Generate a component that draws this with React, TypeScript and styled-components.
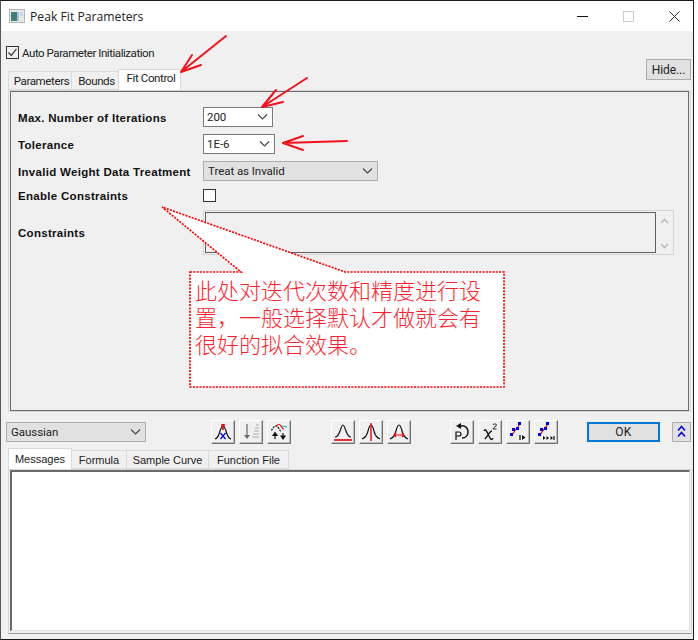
import React from "react";
import styled, { createGlobalStyle } from "styled-components";

const Global = createGlobalStyle`
  html, body { margin: 0; padding: 0; background: #fff; }
  * { box-sizing: border-box; }
`;

const UI = `Roboto, "Liberation Sans", Arial, sans-serif`;

const Win = styled.div`
  position: relative;
  width: 694px;
  height: 640px;
  border: 1px solid #1a1a1a;
  border-left-color: #555;
  background: #f0f0f0;
  display: flex;
  flex-direction: column;
  font-family: ${UI};
  color: #111;
  overflow: hidden;
`;

const TitleBar = styled.div`
  height: 30px;
  background: #fff;
  display: flex;
  align-items: center;
  padding-left: 8px;
  flex: none;
`;

const TitleText = styled.span`
  margin-left: 5px;
  font: 12.2px "Open Sans", sans-serif;
  color: #222;
`;

const WinControls = styled.div`
  margin-left: auto;
  display: flex;
  margin-right: 13px;
  gap: 35px;
  align-items: center;
`;

const TopArea = styled.div`
  display: flex;
  justify-content: space-between;
  height: 59px;
  padding-left: 5px;
  flex: none;
`;

const TopLeft = styled.div`
  display: flex;
  flex-direction: column;
  padding-top: 15px;
`;

const CheckRow = styled.label`
  display: flex;
  align-items: center;
  height: 13px;
  gap: 3px;
  font-size: 11.5px;
  letter-spacing: -0.45px;
  color: #222;
  white-space: nowrap;
`;

const CheckBox = styled.span<{ $size?: number; $white?: boolean }>`
  display: inline-flex;
  align-items: center;
  justify-content: center;
  width: ${(p) => p.$size ?? 13}px;
  height: ${(p) => p.$size ?? 13}px;
  border: 1px solid #333;
  background: ${(p) => (p.$white ? "#fff" : "#f0f0f0")};
  flex: none;
`;

const TabStrip = styled.div<{ $top: number; $left: number }>`
  display: flex;
  align-items: flex-end;
  margin-top: ${(p) => p.$top}px;
  margin-left: ${(p) => p.$left}px;
  height: 21px;
  flex: none;
`;

const Tab = styled.div<{ $w: number; $active?: boolean; $lift?: boolean; $bold?: boolean }>`
  width: ${(p) => p.$w}px;
  height: ${(p) => (p.$active ? 21 : 19)}px;
  background: ${(p) => (p.$active ? "#fff" : "#f0f0f0")};
  border: 1px solid #dadada;
  border-bottom: ${(p) => (p.$active ? "none" : "1px solid #dadada")};
  margin-left: -1px;
  padding-bottom: ${(p) => (p.$lift ? 4 : 0)}px;
  padding-left: ${(p) => (p.$bold ? 0 : 3)}px;
  display: flex;
  align-items: center;
  justify-content: center;
  font-family: ${(p) => (p.$bold ? `"Liberation Sans", sans-serif` : UI)};
  font-size: ${(p) => (p.$bold ? 11 : 11.5)}px;
  color: #222;
  letter-spacing: ${(p) => (p.$bold ? "0" : "-0.38px")};
  white-space: nowrap;
  &:first-child { margin-left: 0; }
`;

const HideBtn = styled.button`
  margin-top: 28px;
  margin-right: 2px;
  width: 45px;
  height: 21px;
  background: #e1e1e1;
  border: 1px solid #adadad;
  font: 12px ${UI};
  letter-spacing: -0.1px;
  color: #222;
  padding: 0;
`;

const PanelFrame = styled.div<{ $height: number; $w: number }>`
  margin-left: 7px;
  width: ${(p) => p.$w}px;
  height: ${(p) => p.$height}px;
  border: 1px solid #d8d8d8;
  border-bottom-color: #999;
  padding: 0 1px 2px 1px;
  flex: none;
`;

const UpperFrame = styled(PanelFrame)`
  border-bottom-color: #d8d8d8;
  padding-bottom: 0;
`;

const FormPanel = styled.div`
  height: 100%;
  border: 1px solid #6a6a6a;
  padding: 15px 0 0 7px;
  display: flex;
  flex-direction: column;
  gap: 7px;
`;

const FormRow = styled.div<{ $h: number }>`
  display: grid;
  grid-template-columns: 185px 1fr;
  align-items: center;
  height: ${(p) => p.$h}px;
`;

const Label = styled.div`
  font: bold 11.5px "Liberation Sans", sans-serif;
  letter-spacing: 0.3px;
  color: #111;
  white-space: nowrap;
  padding-top: 1px;
`;

const Combo = styled.div<{ $w: number; $off?: boolean; $pad?: number }>`
  width: ${(p) => p.$w}px;
  height: 20px;
  background: ${(p) => (p.$off ? "#e1e1e1" : "#fff")};
  border: 1px solid ${(p) => (p.$off ? "#adadad" : "#7a7a7a")};
  display: flex;
  align-items: center;
  justify-content: space-between;
  padding: 0 4px 0 ${(p) => p.$pad ?? 3}px;
  font-size: 11.5px;
  color: #222;
  letter-spacing: -0.05px;
`;

const ConstraintBox = styled.div`
  width: 471px;
  height: 45px;
  border: 1px solid #d4d4d4;
  display: flex;
`;

const ConstraintInput = styled.div`
  width: 451px;
  margin-left: 1px;
  margin-top: 1px;
  height: 41px;
  border: 1px solid #5f5f5f;
`;

const Scroll = styled.div`
  flex: 1;
  display: flex;
  flex-direction: column;
  justify-content: space-between;
  align-items: center;
  padding: 7px 0 5px;
`;

const Toolbar = styled.div`
  display: flex;
  align-items: center;
  height: 24px;
  margin-top: 8px;
  padding-left: 5px;
  flex: none;
`;

const ToolGroup = styled.div<{ $ml: number }>`
  display: flex;
  gap: 4px;
  margin-left: ${(p) => p.$ml}px;
`;

const ToolBtn = styled.div`
  width: 24px;
  height: 24px;
  background: #f0f0f0;
  border: 1px solid;
  border-color: #fff #6f6f6f #6f6f6f #fff;
  box-shadow: inset -1px -1px 0 #bdbdbd;
  display: flex;
  align-items: center;
  justify-content: center;
`;

const OkBtn = styled.button`
  margin-left: 29px;
  margin-top: -1px;
  width: 73px;
  height: 20px;
  background: #e1e1e1;
  border: 2px solid #0078d7;
  font: 12px ${UI};
  color: #222;
  padding: 0;
  letter-spacing: 0.3px;
`;

const ExpandBtn = styled.div`
  margin-left: 12px;
  margin-top: -1px;
  width: 19px;
  height: 20px;
  background: #e1e1e1;
  border: 1px solid #adadad;
  display: flex;
  align-items: center;
  justify-content: center;
`;

const MessagePane = styled.div`
  height: 100%;
  background: #fff;
  border-top: 2px solid #6a6a6a;
  border-left: 2px solid #6a6a6a;
  border-right: 1px solid #e2e2e2;
  border-bottom: 1px solid #e2e2e2;
`;

const Callout = styled.div`
  position: absolute;
  left: 194px;
  top: 275px;
  width: 300px;
  font: 300 22px/27px "Noto Sans CJK SC", sans-serif;
  color: #ff1f2e;
`;

const Overlay = styled.svg`
  position: absolute;
  left: -1px;
  top: -1px;
  pointer-events: none;
`;

const Chevron = ({ c = "#444" }: { c?: string }) => (
  <svg width="11" height="6" viewBox="0 0 11 6"><path d="M1 .5 5.500 5 10 .5" fill="none" stroke={c} strokeWidth="1.100" /></svg>
);

const Ico = ({ children }: { children: React.ReactNode }) => (
  <svg width="22" height="22" viewBox="0 0 22 22" fill="none" strokeWidth="1.200">{children}</svg>
);

const Fit = () => (
  <>
    <path d="M4 15 13 3" stroke="#e00" strokeWidth="1.200" />
    <rect x="11" y="1" width="3" height="3" fill="#00d" />
    <rect x="9" y="6" width="3" height="3" fill="#00d" />
    <rect x="5" y="7" width="3" height="3" fill="#00d" />
    <rect x="3" y="12" width="3" height="3" fill="#00d" />
  </>
);

export default function App() {
  return (
    <>
      <Global />
      <Win>
        <TitleBar>
          <svg width="16" height="14" viewBox="0 0 16 14">
            <rect x=".5" y=".5" width="15" height="13" fill="#e8e8e8" stroke="#b5b5b5" />
            <rect x="2" y="3" width="6" height="9" fill="#3f7f7f" />
            <rect x="8" y="3" width="2" height="9" fill="#a9c4d8" />
            <rect x="11" y="3" width="3" height="4" fill="#cfd8e0" />
          </svg>
          <TitleText>Peak Fit Parameters</TitleText>
          <WinControls>
            <svg width="11" height="11" viewBox="0 0 11 11"><path d="M0 5.500h11" stroke="#111" strokeWidth="1" /></svg>
            <svg width="11" height="11" viewBox="0 0 11 11"><rect x=".5" y=".5" width="10" height="10" fill="none" stroke="#ccc" /></svg>
            <svg width="11" height="11" viewBox="0 0 11 11"><path d="M.5.5l10 10M10.500.5l-10 10" stroke="#222" strokeWidth="1" /></svg>
          </WinControls>
        </TitleBar>

        <TopArea>
          <TopLeft>
            <CheckRow>
              <CheckBox>
                <svg width="11" height="11" viewBox="0 0 11 11"><path d="M1.500 5.500 4.200 8.500 9.500 1.800" fill="none" stroke="#444" strokeWidth="1.300" /></svg>
              </CheckBox>
              Auto Parameter Initialization
            </CheckRow>
            <TabStrip $top={10} $left={2}>
              <Tab $w={64}>Parameters</Tab>
              <Tab $w={48}>Bounds</Tab>
              <Tab $w={63} $active $lift>Fit Control</Tab>
            </TabStrip>
          </TopLeft>
          <HideBtn>Hide...</HideBtn>
        </TopArea>

        <UpperFrame $height={322} $w={683}>
          <FormPanel>
            <FormRow $h={20}>
              <Label>Max. Number of Iterations</Label>
              <Combo $w={70}>200<Chevron /></Combo>
            </FormRow>
            <FormRow $h={20}>
              <Label>Tolerance</Label>
              <Combo $w={72}>1E-6<Chevron /></Combo>
            </FormRow>
            <FormRow $h={20}>
              <Label>Invalid Weight Data Treatment</Label>
              <Combo $w={175} $off $pad={4}>Treat as Invalid<Chevron /></Combo>
            </FormRow>
            <FormRow $h={15}>
              <Label>Enable Constraints</Label>
              <CheckBox $white />
            </FormRow>
            <FormRow $h={45}>
              <Label>Constraints</Label>
              <ConstraintBox>
                <ConstraintInput />
                <Scroll>
                  <svg width="9" height="6" viewBox="0 0 9 6"><path d="M1 5 4.500 1.500 8 5" fill="none" stroke="#bbb" strokeWidth="1.600" /></svg>
                  <svg width="9" height="6" viewBox="0 0 9 6"><path d="M1 1 4.500 4.500 8 1" fill="none" stroke="#bbb" strokeWidth="1.600" /></svg>
                </Scroll>
              </ConstraintBox>
            </FormRow>
          </FormPanel>
        </UpperFrame>

        <Toolbar>
          <Combo $w={140} $off $pad={4}>Gaussian<Chevron /></Combo>
          <ToolGroup $ml={65}>
            <ToolBtn>
              <Ico>
                <path d="M3 18c3-1 4-4 5-8 1-3 2-5 3-5s2 2 3 5c1 4 2 7 5 8" stroke="#111" />
                <path d="M11 3v6M9 4h4" stroke="#e00" strokeWidth="1.600" />
                <path d="M8.500 12l5 6M13.500 12l-5 6" stroke="#00c" />
              </Ico>
            </ToolBtn>
            <ToolBtn>
              <Ico>
                <path d="M7 3v13" stroke="#666" />
                <path d="M4 14l3 4 3-4z" fill="#666" />
                <path d="M12 16h7M13 13h6M14 10h5M15 7h4M16 4h3" stroke="#aaa" />
              </Ico>
            </ToolBtn>
            <ToolBtn>
              <Ico>
                <path d="M3 9c2 0 2-4 5-4s3 5 5 5" stroke="#111" strokeDasharray="2 1" />
                <path d="M8 5c2-2 4-2 5 0s2 3 3 3" stroke="#e00" />
                <path d="M14 5c2 0 3 1 5 1" stroke="#0cc" />
                <path d="M7 18v-5M5 14.500l2-3 2 3zM15 12v5M13 15l2 3 2-3z" stroke="#111" fill="#111" />
              </Ico>
            </ToolBtn>
          </ToolGroup>
          <ToolGroup $ml={40}>
            <ToolBtn>
              <Ico>
                <path d="M3 16c3 0 4-3 5-6s2-6 3-6 2 3 3 6 2 6 5 6" stroke="#111" />
                <path d="M2 19h18" stroke="#e00" strokeWidth="1.600" />
              </Ico>
            </ToolBtn>
            <ToolBtn>
              <Ico>
                <path d="M2 18c3-1 5-4 6-8s2-6 3-6 2 2 3 6 3 7 6 8" stroke="#111" />
                <path d="M11 2v18" stroke="#e00" strokeWidth="1.400" />
              </Ico>
            </ToolBtn>
            <ToolBtn>
              <Ico>
                <path d="M2 18c3-1 5-4 6-8s2-6 3-6 2 2 3 6 3 7 6 8" stroke="#111" />
                <path d="M6 14h10M6 14l2-2M6 14l2 2M16 14l-2-2M16 14l-2 2" stroke="#e00" />
              </Ico>
            </ToolBtn>
          </ToolGroup>
          <ToolGroup $ml={39}>
            <ToolBtn>
              <Ico>
                <path d="M10 5c4-1 7 2 7 6s-3 6-6 6" stroke="#111" strokeWidth="1.500" />
                <path d="M5 5l5-3v6z" fill="#111" />
                <path d="M5 19v-8h3a2 2 0 0 1 0 4H5" stroke="#111" />
              </Ico>
            </ToolBtn>
            <ToolBtn>
              <Ico>
                <path d="M5 10c1-2 2-1 3 1l3 6c1 2 2 2 3 0M13 10c-2 0-3 3-7 8" stroke="#111" strokeWidth="1.400" />
                <path d="M14 4c0-1.500 3.500-1.500 3.500 0s-3.500 2.500-3.500 4h3.500" stroke="#111" strokeWidth=".9" />
              </Ico>
            </ToolBtn>
            <ToolBtn>
              <Ico>
                <Fit />
                <path d="M13 14v5" stroke="#111" strokeWidth="1.300" />
                <path d="M15 14l3.500 2.500L15 19z" fill="#111" />
              </Ico>
            </ToolBtn>
            <ToolBtn>
              <Ico>
                <Fit />
                <path d="M8 15l2.500 2L8 19zM11.500 15l2.500 2-2.500 2z" fill="#111" />
                <path d="M15.500 15l2.500 2-2.500 2z" fill="#111" />
                <path d="M19 15v4" stroke="#111" strokeWidth="1.200" />
              </Ico>
            </ToolBtn>
          </ToolGroup>
          <OkBtn>OK</OkBtn>
          <ExpandBtn>
            <svg width="9" height="13" viewBox="0 0 9 13"><path d="M1 5.500 4.500 1.500 8 5.500M1 11.500 4.500 7.500 8 11.500" fill="none" stroke="#0000e0" strokeWidth="1.500" /></svg>
          </ExpandBtn>
        </Toolbar>

        <TabStrip $top={4} $left={7}>
          <Tab $w={64} $active $bold>Messages</Tab>
          <Tab $w={56} $bold>Formula</Tab>
          <Tab $w={83} $bold>Sample Curve</Tab>
          <Tab $w={81} $bold>Function File</Tab>
        </TabStrip>

        <PanelFrame $height={165} $w={684}>
          <MessagePane />
        </PanelFrame>

        <Overlay width="698" height="640" viewBox="0 0 698 640">
          <g stroke="#f5101c" strokeWidth="2" fill="none" strokeLinecap="round" strokeLinejoin="round">
            <path d="M226 36 181 72M192 55 181 72 201 65" />
            <path d="M307 78 262 107M276 90 262 107 283 102" />
            <path d="M347 141 283 143M303 136 283 143 303 150" />
          </g>
          <path
            d="M190 272H241L162 207L345 272H504V387H190Z"
            fill="#fff"
            stroke="#f00"
            strokeWidth="1.700"
            strokeDasharray="2 1.300"
          />
        </Overlay>
        <Callout>此处对迭代次数和精度进行设置，一般选择默认才做就会有很好的拟合效果。</Callout>
      </Win>
    </>
  );
}
